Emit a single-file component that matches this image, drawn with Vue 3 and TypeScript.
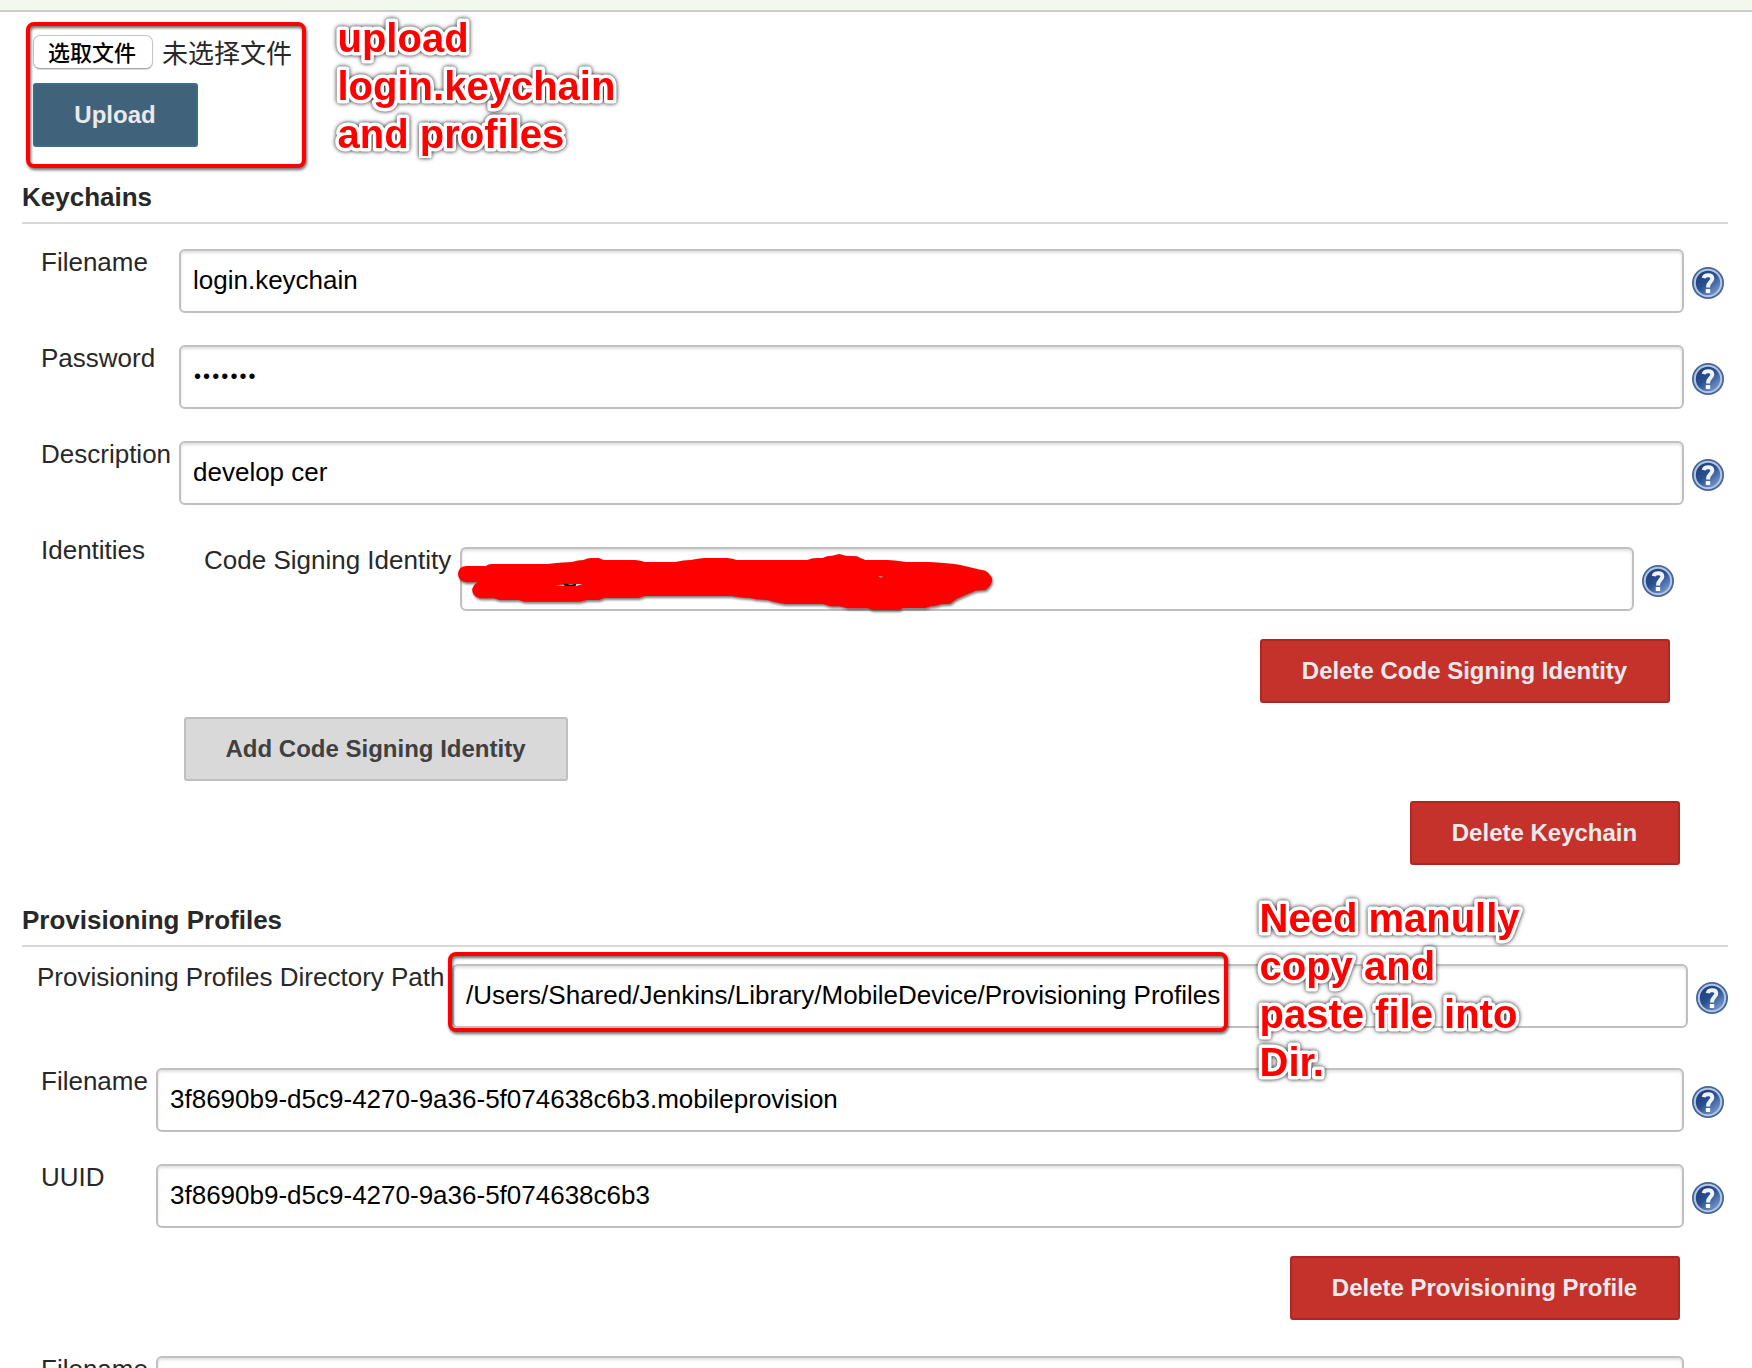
<script setup lang="ts">
import { defineComponent, h } from 'vue'

interface Field {
  label: string
  value: string
  secret?: boolean
}

const keychainFields: Field[] = [
  { label: 'Filename', value: 'login.keychain' },
  { label: 'Password', value: '•••••••', secret: true },
  { label: 'Description', value: 'develop cer' },
]

const profileFields: Field[] = [
  { label: 'Filename', value: '3f8690b9-d5c9-4270-9a36-5f074638c6b3.mobileprovision' },
  { label: 'UUID', value: '3f8690b9-d5c9-4270-9a36-5f074638c6b3' },
]

const uploadNote: string[] = ['upload', 'login.keychain', 'and profiles']
const pathNote: string[] = ['Need manully', 'copy and', 'paste file into', 'Dir.']

const HelpIcon = defineComponent({
  render() {
    return h('svg', { width: 32, height: 32, viewBox: '0 0 32 32', style: { flex: 'none', display: 'block' } }, [
      h('circle', { cx: 16, cy: 16, r: 16, fill: '#4466a0' }),
      h('circle', { cx: 16, cy: 16, r: 13.2, fill: 'url(#helpFill)', stroke: '#b4c5df', 'stroke-width': 2 }),
      h('path', {
        d: 'M11.7 11.2C12.2 8.9 13.9 8.3 16.2 8.3C18.9 8.3 20.3 9.7 20.3 11.6C20.3 14.8 16 14.8 16 20.4',
        fill: 'none',
        stroke: '#eef2f9',
        'stroke-width': 4,
      }),
      h('rect', { x: 13.8, y: 22, width: 4.4, height: 4, rx: 0.6, fill: '#fff' }),
    ])
  },
})
</script>

<template>
  <div class="page">
    <svg class="defs" width="0" height="0">
      <defs>
        <linearGradient id="helpFill" x1="0.1" y1="0.1" x2="0.85" y2="0.95">
          <stop offset="0" stop-color="#1c3d7c" />
          <stop offset="0.45" stop-color="#284f90" />
          <stop offset="1" stop-color="#7fa0d0" />
        </linearGradient>
      </defs>
    </svg>
    <div class="strip"></div>
    <main>
      <section class="upload">
        <div class="file-row">
          <button class="file-btn">选取文件</button>
          <span class="file-status">未选择文件</span>
        </div>
        <button class="btn primary">Upload</button>
        <div class="mark mark-upload"></div>
        <svg class="note note-upload" width="320" height="146">
          <text v-for="(line, i) in uploadNote" :key="line" x="16.5" :y="40 + i * 48">{{ line }}</text>
        </svg>
      </section>

      <h2>Keychains</h2>
      <section class="keychain">
        <div v-for="f in keychainFields" :key="f.label" class="row">
          <label>{{ f.label }}</label>
          <input :value="f.value" :class="{ secret: f.secret }" readonly />
          <span class="help"><HelpIcon /></span>
        </div>
        <div class="row identities">
          <label>Identities</label>
          <div class="nested">
            <div class="row">
              <label>Code Signing Identity</label>
              <div class="covered">
                <input value="" readonly />
                <svg class="scribble" width="560" height="90" viewBox="0 0 560 90">
                  <g transform="scale(0.38265 0.33333)">
                    <path fill="#f00" d="M68 108H120Q125 102 135 102H280Q310 97 345 96Q360 90 375 90Q385 84 395 84H415Q425 90 430 90H510Q525 91 535 96H615Q635 90 655 90Q675 85 690 84H750Q765 86 775 90H960Q970 84 985 84H1000Q1010 77 1025 77L1043 72L1060 77Q1075 77 1090 79Q1100 87 1112 90H1170Q1195 91 1218 96H1275Q1330 99 1360 105L1415 120Q1430 119 1443 145Q1444 165 1425 180L1400 182L1375 194L1350 207L1333 221L1308 223Q1300 228 1283 229L1268 234H1210L1200 240H1130L1118 235H1065L1045 229H1020L1000 222H900Q870 216 855 210L825 208L810 204Q780 203 762 198H535L520 204H430L415 210H385L365 215H220L205 210H155L140 205H105Q85 200 84 180Q86 165 98 157H70Q48 155 47 132Q48 110 68 108Z" />
                    <path fill="#ddd" d="M302 166L345 162L372 162L357 168L322 167Z" />
                    <path fill="#111" d="M322 161H332L340 164L357 161L354 168H326Z" />
                    <path fill="#a99" d="M1144 138L1158 139L1152 143Z" />
                  </g>
                </svg>
              </div>
              <span class="help"><HelpIcon /></span>
            </div>
            <div class="actions"><button class="btn danger w-csi">Delete Code Signing Identity</button></div>
            <button class="btn plain">Add Code Signing Identity</button>
          </div>
        </div>
        <div class="actions end"><button class="btn danger w-key">Delete Keychain</button></div>
      </section>

      <h2 class="second">Provisioning Profiles</h2>
      <section class="path">
        <div class="row">
          <label>Provisioning Profiles Directory Path</label>
          <div class="covered">
            <input value="/Users/Shared/Jenkins/Library/MobileDevice/Provisioning Profiles" readonly />
            <div class="mark mark-path"></div>
            <svg class="note note-path" width="300" height="210">
              <text v-for="(line, i) in pathNote" :key="line" x="16.5" :y="40 + i * 48">{{ line }}</text>
            </svg>
          </div>
          <span class="help"><HelpIcon /></span>
        </div>
      </section>
      <section class="profile">
        <div v-for="f in profileFields" :key="f.label" class="row">
          <label>{{ f.label }}</label>
          <input :value="f.value" readonly />
          <span class="help"><HelpIcon /></span>
        </div>
        <div class="actions end"><button class="btn danger w-prof">Delete Provisioning Profile</button></div>
        <div class="row next">
          <label>Filename</label>
          <input value="" readonly />
          <span class="help"><HelpIcon /></span>
        </div>
      </section>
    </main>
  </div>
</template>

<style>
body {
  margin: 0;
  background: #fff;
  overflow: hidden;
}
</style>

<style scoped>
.page {
  width: 1752px;
  height: 1368px;
  overflow: hidden;
  background: #fff;
  color: #282828;
  font: 26px/30px "Liberation Sans", Arial, "Noto Sans CJK SC", sans-serif;
}
.page * {
  box-sizing: border-box;
}
.defs {
  position: absolute;
}
.strip {
  height: 12px;
  background: #f3f8ee;
  border-bottom: 2px solid #c8cfc2;
}
main {
  padding: 0 24px 0 22px;
}
.upload {
  position: relative;
  height: 174px;
  padding: 23px 0 0 11px;
}
.file-row {
  display: flex;
  align-items: center;
  height: 34px;
  margin-bottom: 14px;
}
.file-btn {
  width: 120px;
  height: 34px;
  padding: 0 2px 2px 0;
  border: 1px solid #c4c4c4;
  border-bottom-color: #a8a8a8;
  border-radius: 7px;
  background: #fff;
  box-shadow: 0 1px 1px rgba(0, 0, 0, 0.15);
  color: #000;
  font: 500 22px/30px "Noto Sans CJK SC", sans-serif;
}
.file-status {
  margin: -1px 0 0 9px;
  font: 26px/34px "Noto Sans CJK SC", sans-serif;
}
.mark {
  position: absolute;
  border: 4px solid #f00;
  border-radius: 8px;
  filter: drop-shadow(1px 2px 1.5px rgba(0, 0, 0, 0.6));
}
.mark-upload {
  left: 4px;
  top: 10px;
  width: 280px;
  height: 146px;
}
.mark-path {
  left: -4px;
  top: -12px;
  width: 780px;
  height: 80px;
}
.note {
  position: absolute;
  overflow: hidden;
  filter: drop-shadow(0 0 2px rgba(0, 0, 0, 0.9));
}
.note text {
  font: bold 40px "Liberation Sans", Arial, sans-serif;
  fill: #f00;
  stroke: #fff;
  stroke-width: 7px;
  stroke-linejoin: round;
  paint-order: stroke;
}
.note-upload {
  left: 299px;
  top: 0;
}
.note-path {
  left: 791px;
  top: -72px;
}
h2 {
  height: 38px;
  margin: 0;
  border-bottom: 2px solid #d8d8d8;
  font-size: 26px;
  font-weight: bold;
  line-height: 22px;
}
h2.second {
  margin-top: 44px;
}
.row {
  display: flex;
  align-items: flex-start;
  height: 64px;
  margin-bottom: 32px;
}
label {
  flex: none;
  margin: -2px 1px 0 -1px;
  white-space: nowrap;
}
input {
  display: block;
  flex: 1;
  width: 100%;
  min-width: 0;
  height: 64px;
  margin: 0;
  padding: 0 12px 2px;
  border: 2px solid #c0c0c0;
  border-radius: 6px;
  outline: none;
  background: #fff;
  box-shadow: inset 0 2px 3px rgba(0, 0, 0, 0.12);
  color: #000;
  font: inherit;
}
.secret {
  padding: 0 13px 1px;
  font-size: 20px;
  letter-spacing: 2.1px;
}
.help {
  flex: none;
  margin: 18px 0 0 8px;
}
.keychain {
  padding: 25px 4px 0 20px;
}
.keychain > .row > label {
  width: 137px;
}
.keychain > .identities {
  height: 244px;
  margin-bottom: 20px;
}
.nested {
  flex: 1;
  padding-top: 10px;
}
.nested .row {
  margin: 0 50px 28px 26px;
}
.nested .row label {
  width: 255px;
}
.covered {
  position: relative;
  flex: 1;
}
.scribble {
  position: absolute;
  left: -20px;
  top: -17px;
  filter: drop-shadow(1px 2px 1px rgba(0, 0, 0, 0.5));
}
.actions {
  display: flex;
  justify-content: flex-end;
  margin-right: 54px;
}
.actions.end {
  margin-right: 44px;
}
.btn {
  display: block;
  height: 64px;
  padding: 0 1px 1px 0;
  border: 2px solid;
  border-radius: 3px;
  font: bold 24px/30px "Liberation Sans", Arial, sans-serif;
  white-space: nowrap;
}
.primary {
  width: 165px;
  background: #40627a;
  border-color: #3e6d8b;
  color: #eaeaea;
}
.danger {
  background: #c5322c;
  border-color: #b02622;
  color: #eaeaea;
}
.plain {
  width: 384px;
  margin: 14px 0 0 5px;
  background: #d9d9d9;
  border-color: #bfbfbf;
  color: #404040;
}
.w-csi {
  width: 410px;
}
.w-key {
  width: 270px;
}
.w-prof {
  width: 390px;
}
.path {
  padding: 17px 0 0 16px;
}
.path .row {
  margin-bottom: 40px;
}
.path label {
  width: 414px;
}
.profile {
  padding: 0 4px 0 20px;
}
.profile label {
  width: 114px;
}
.profile .actions {
  margin-top: -4px;
  margin-bottom: 36px;
}
</style>
